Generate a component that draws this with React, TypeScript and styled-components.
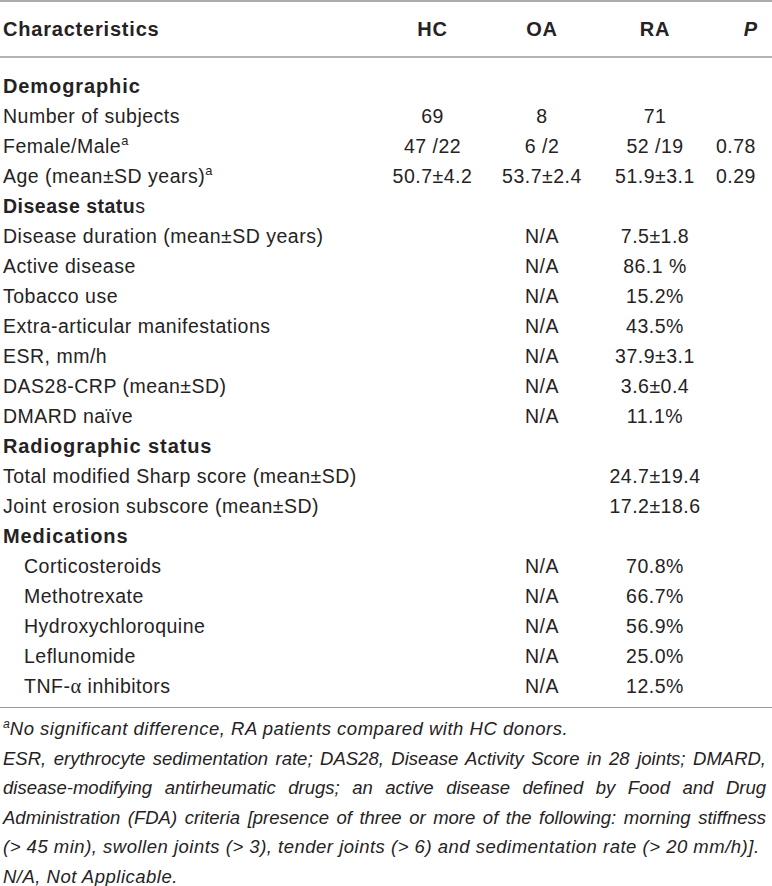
import React from "react";
import styled, { createGlobalStyle } from "styled-components";

const GlobalStyle = createGlobalStyle`
  html, body {
    margin: 0;
    padding: 0;
    background: #ffffff;
  }
  body {
    font-family: "Liberation Sans", Arial, Helvetica, sans-serif;
    color: #262223;
    -webkit-font-smoothing: antialiased;
  }
`;

const COLS = "385px 95px 124px 102px 66px";

const Table = styled.div`
  width: 772px;
  border-top: 2px solid #acacac;
`;

const HeaderRow = styled.div`
  display: grid;
  grid-template-columns: ${COLS};
  height: 54px;
  align-items: center;
  border-bottom: 2px solid #b4b4b4;
  font-weight: 700;
  font-size: 20px;
  letter-spacing: 0.8px;
`;

const HeadCell = styled.div<{ $align?: string; $pr?: number; $italic?: boolean }>`
  text-align: ${(p) => p.$align || "center"};
  padding-left: ${(p) => (p.$align === "left" ? "3px" : "0")};
  padding-right: ${(p) => (p.$pr ? `${p.$pr}px` : "0")};
  font-style: ${(p) => (p.$italic ? "italic" : "normal")};
`;

const Body = styled.div`
  padding: 13px 0 6px;
  border-bottom: 1.5px solid #9a9a9a;
`;

const Row = styled.div`
  display: grid;
  grid-template-columns: ${COLS};
  height: 30px;
  align-items: center;
  font-size: 19.5px;
  letter-spacing: 0.5px;
  line-height: 30px;
  white-space: nowrap;
`;

const Label = styled.div<{ $indent?: number; $bold?: boolean }>`
  padding-left: ${(p) => (p.$indent ? p.$indent : 3)}px;
  font-weight: ${(p) => (p.$bold ? 700 : 400)};
  font-size: ${(p) => (p.$bold ? "20px" : "inherit")};
  letter-spacing: ${(p) => (p.$bold ? "0.9px" : "inherit")};
`;

const Bold = styled.span`
  font-weight: 700;
`;

const Value = styled.div<{ $pr?: number }>`
  text-align: center;
  padding-right: ${(p) => (p.$pr ? `${p.$pr}px` : "0")};
`;

const Sup = styled.sup`
  font-size: 0.66em;
  line-height: 0;
  vertical-align: 0.6em;
  letter-spacing: 0;
`;

const Greek = styled.span`
  font-family: "Liberation Serif", "Times New Roman", serif;
  font-size: 1.05em;
`;

const Notes = styled.div`
  padding: 6px 6px 0 3px;
  font-style: italic;
  font-size: 18.5px;
  line-height: 29.5px;
  letter-spacing: 0;
`;

const NoteLine = styled.div<{ $justify?: boolean }>`
  white-space: ${(p) => (p.$justify ? "normal" : "nowrap")};
  text-align: ${(p) => (p.$justify ? "justify" : "left")};
  text-align-last: ${(p) => (p.$justify ? "justify" : "left")};
  letter-spacing: ${(p) => (p.$justify ? "0" : "0.5px")};
`;

type R = {
  label: React.ReactNode;
  hc?: string;
  oa?: string;
  ra?: string;
  p?: string;
  bold?: boolean;
  indent?: number;
};

const rows: R[] = [
  { label: "Demographic", bold: true },
  { label: "Number of subjects", hc: "69", oa: "8", ra: "71" },
  {
    label: (
      <>
        Female/Male<Sup>a</Sup>
      </>
    ),
    hc: "47 /22",
    oa: "6 /2",
    ra: "52 /19",
    p: "0.78",
  },
  {
    label: (
      <>
        Age (mean±SD years)<Sup>a</Sup>
      </>
    ),
    hc: "50.7±4.2",
    oa: "53.7±2.4",
    ra: "51.9±3.1",
    p: "0.29",
  },
  {
    label: (
      <>
        <Bold>Disease statu</Bold>s
      </>
    ),
  },
  { label: "Disease duration (mean±SD years)", oa: "N/A", ra: "7.5±1.8" },
  { label: "Active disease", oa: "N/A", ra: "86.1 %" },
  { label: "Tobacco use", oa: "N/A", ra: "15.2%" },
  { label: "Extra-articular manifestations", oa: "N/A", ra: "43.5%" },
  { label: "ESR, mm/h", oa: "N/A", ra: "37.9±3.1" },
  { label: "DAS28-CRP (mean±SD)", oa: "N/A", ra: "3.6±0.4" },
  { label: "DMARD naïve", oa: "N/A", ra: "11.1%" },
  { label: "Radiographic status", bold: true },
  { label: "Total modified Sharp score (mean±SD)", ra: "24.7±19.4" },
  { label: "Joint erosion subscore (mean±SD)", ra: "17.2±18.6" },
  { label: "Medications", bold: true },
  { label: "Corticosteroids", oa: "N/A", ra: "70.8%", indent: 24 },
  { label: "Methotrexate", oa: "N/A", ra: "66.7%", indent: 24 },
  { label: "Hydroxychloroquine", oa: "N/A", ra: "56.9%", indent: 24 },
  { label: "Leflunomide", oa: "N/A", ra: "25.0%", indent: 24 },
  {
    label: (
      <>
        TNF-<Greek>α</Greek> inhibitors
      </>
    ),
    oa: "N/A",
    ra: "12.5%",
    indent: 24,
  },
];

export default function App() {
  return (
    <>
      <GlobalStyle />
      <Table>
        <HeaderRow>
          <HeadCell $align="left">Characteristics</HeadCell>
          <HeadCell>HC</HeadCell>
          <HeadCell>OA</HeadCell>
          <HeadCell>RA</HeadCell>
          <HeadCell $align="right" $pr={14} $italic>
            P
          </HeadCell>
        </HeaderRow>
        <Body>
          {rows.map((r, i) => (
            <Row key={i}>
              <Label $bold={r.bold} $indent={r.indent}>
                {r.label}
              </Label>
              <Value>{r.hc}</Value>
              <Value>{r.oa}</Value>
              <Value>{r.ra}</Value>
              <Value $pr={6}>{r.p}</Value>
            </Row>
          ))}
        </Body>
        <Notes>
          <NoteLine>
            <Sup>a</Sup>No significant difference, RA patients compared with HC donors.
          </NoteLine>
          <NoteLine $justify>
            ESR, erythrocyte sedimentation rate; DAS28, Disease Activity Score in 28 joints; DMARD,
          </NoteLine>
          <NoteLine $justify>
            disease-modifying antirheumatic drugs; an active disease defined by Food and Drug
          </NoteLine>
          <NoteLine $justify>
            Administration (FDA) criteria [presence of three or more of the following: morning stiffness
          </NoteLine>
          <NoteLine>
            (&gt; 45 min), swollen joints (&gt; 3), tender joints (&gt; 6) and sedimentation rate (&gt; 20 mm/h)].
          </NoteLine>
          <NoteLine>N/A, Not Applicable.</NoteLine>
        </Notes>
      </Table>
    </>
  );
}
